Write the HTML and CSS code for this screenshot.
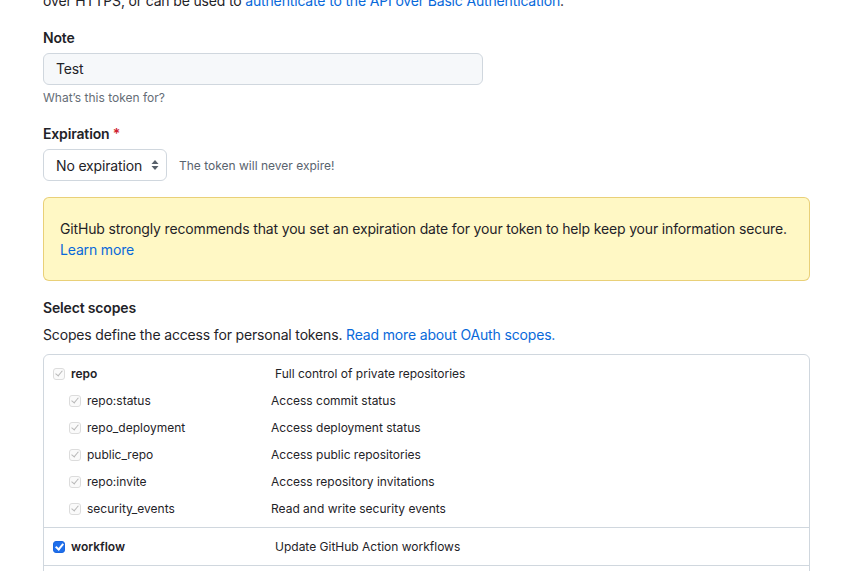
FILE: index.html
```html
<!DOCTYPE html>
<html>
<head>
<meta charset="utf-8">
<link rel="stylesheet" href="styles.css">
</head>
<body>
<main class="page">
  <p class="intro">over HTTPS, or can be used to <a href="#">authenticate to the API over Basic Authentication</a>.</p>

  <div class="field">
    <label class="label">Note</label>
    <div class="input">Test</div>
    <p class="hint">What’s this token for?</p>
  </div>

  <div class="field">
    <label class="label">Expiration <span class="req">*</span></label>
    <div class="select-row">
      <div class="select">No expiration
        <svg class="arrows" width="8" height="12" viewBox="0 0 8 12"><path d="M4 1 L7.5 5 H0.5 Z M4 11 L7.5 7 H0.5 Z" fill="#57606a"/></svg>
      </div>
      <span class="select-note">The token will never expire!</span>
    </div>
  </div>

  <div class="flash">
    GitHub strongly recommends that you set an expiration date for your token to help keep your information secure.<br>
    <a href="#">Learn more</a>
  </div>

  <h3 class="label scopes-title">Select scopes</h3>
  <p class="scopes-desc">Scopes define the access for personal tokens. <a href="#">Read more about OAuth scopes.</a></p>

  <div class="scopes">
    <div class="group">
      <div class="row parent">
        <span class="cb disabled"></span><span class="name">repo</span><span class="desc">Full control of private repositories</span>
      </div>
      <div class="row child">
        <span class="cb disabled"></span><span class="name">repo:status</span><span class="desc">Access commit status</span>
      </div>
      <div class="row child">
        <span class="cb disabled"></span><span class="name">repo_deployment</span><span class="desc">Access deployment status</span>
      </div>
      <div class="row child">
        <span class="cb disabled"></span><span class="name">public_repo</span><span class="desc">Access public repositories</span>
      </div>
      <div class="row child">
        <span class="cb disabled"></span><span class="name">repo:invite</span><span class="desc">Access repository invitations</span>
      </div>
      <div class="row child">
        <span class="cb disabled"></span><span class="name">security_events</span><span class="desc">Read and write security events</span>
      </div>
    </div>
    <div class="group">
      <div class="row parent">
        <span class="cb checked"></span><span class="name">workflow</span><span class="desc">Update GitHub Action workflows</span>
      </div>
    </div>
    <div class="group"></div>
  </div>
</main>
</body>
</html>
```

FILE: styles.css
```css
* { box-sizing: border-box; }
html, body { margin: 0; padding: 0; background: #fff; }
body {
  font-family: Inter, "Liberation Sans", Arial, sans-serif;
  font-size: 14px;
  line-height: 21px;
  letter-spacing: -0.16px;
  color: #1f2328;
  overflow: hidden;
}
a { color: #0969da; text-decoration: none; }
.page { width: 810px; padding-left: 43px; }
.intro { margin: -10px 0 16px; }
.field { margin-bottom: 16px; }
.label { display: block; font-weight: 600; font-size: 14px; margin: 0 0 5px; line-height: 21px; }
.req { color: #cf222e; }
.input {
  width: 440px; height: 32px;
  background: #f6f8fa;
  border: 1px solid #d0d7de;
  border-radius: 6px;
  padding: 0 12px;
  line-height: 30px;
}
.hint { margin: 4px 0 0; font-size: 12px; line-height: 18px; color: #656d76; letter-spacing: 0; }
.select-row { display: flex; align-items: center; gap: 12px; }
.select {
  display: flex; align-items: center; justify-content: space-between;
  width: 124px; height: 32px;
  border: 1px solid #d0d7de; border-radius: 6px;
  padding: 0 7px 0 12px;
  background: #fff;
}
.select-note { font-size: 12px; color: #59636e; letter-spacing: 0; }
.flash {
  background: #fff8c5;
  border: 1px solid rgba(212,167,44,0.5);
  border-radius: 6px;
  padding: 20px 16px;
  margin-bottom: 16px;
}
.scopes-title { margin-bottom: 6px; }
.scopes-desc { margin: 0 0 9px; }
.scopes {
  border: 1px solid #d0d7de;
  border-radius: 6px;
  font-size: 12px;
  letter-spacing: 0;
}
.group { border-bottom: 1px solid #d0d7de; padding: 5px 0; }
.group:first-child { padding-top: 5px; }
.group:last-child { border-bottom: none; height: 10px; }
.row { display: flex; align-items: center; height: 27px; }
.row.parent { padding-left: 9px; }
.row.child { padding-left: 25px; }
.cb {
  width: 12px; height: 12px; border-radius: 3px; flex: none;
  position: relative; margin-right: 6px;
}
.cb.disabled { border: 1px solid #dcdcdc; background: #fafafa; }
.cb.disabled::after {
  content: ""; position: absolute; left: 3px; top: 0px;
  width: 3px; height: 6px;
  border: solid #b8b8b8; border-width: 0 1.3px 1.3px 0;
  transform: rotate(40deg);
}
.cb.checked { background: #1f6feb; border: 1px solid #1a66e0; }
.cb.checked::after {
  content: ""; position: absolute; left: 3px; top: 0px;
  width: 3px; height: 6px;
  border: solid #fff; border-width: 0 2px 2px 0;
  transform: rotate(40deg);
}
.parent .name { font-weight: 600; width: 204px; }
.child .name { width: 184px; }
.desc { color: #1f2328; }
```
